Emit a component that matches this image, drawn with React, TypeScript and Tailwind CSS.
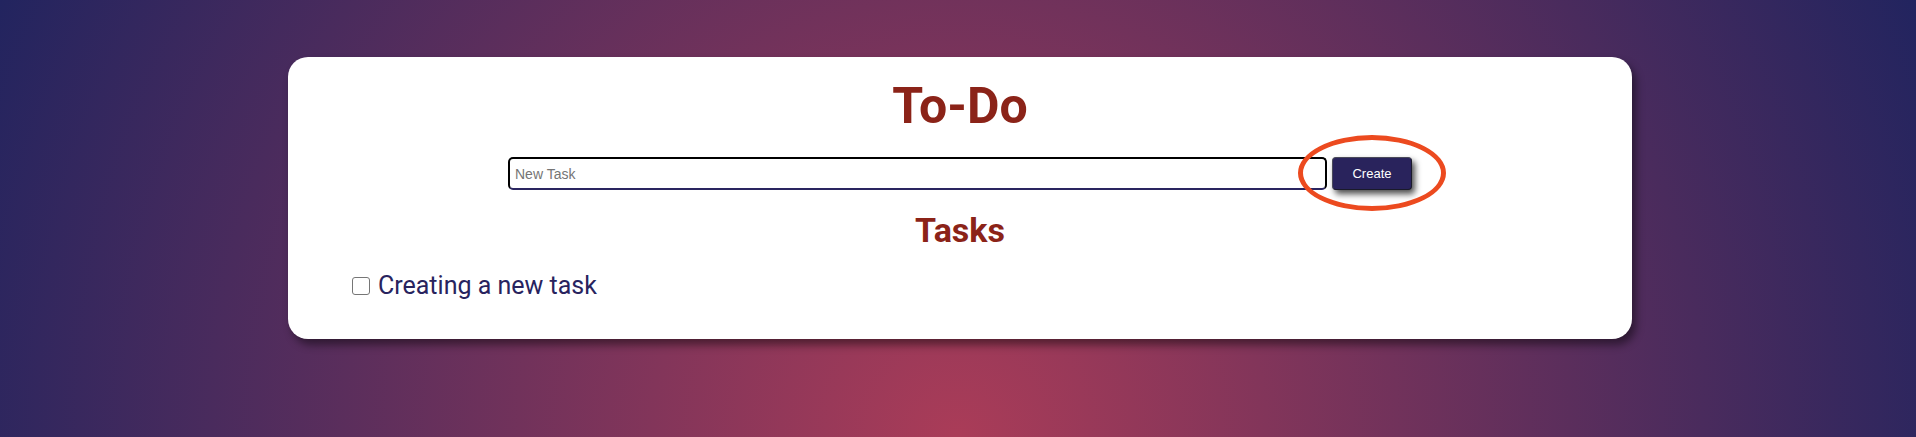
import { useState } from "react";

export default function App() {
  const [task, setTask] = useState("");
  const [done, setDone] = useState(false);

  return (
    <div className="min-h-[437px] w-full bg-[radial-gradient(circle_at_50%_100%,#aa3c58_0%,#22245f_100%)] pt-[57px] pb-[98px] font-['Roboto',sans-serif]">
      {/* Card */}
      <div className="ml-[288px] flex w-[1344px] flex-col items-center rounded-[20px] bg-white pt-[19px] pb-[37px] shadow-[4px_6px_8px_rgba(0,0,0,0.45)]">
        <h1 className="text-[50px] leading-[60px] font-bold text-[#8b2318]">To-Do</h1>

        <div className="relative mt-[21px] flex items-center gap-[5px]">
          <input
            value={task}
            onChange={(e) => setTask(e.target.value)}
            placeholder="New Task"
            className="h-[33px] w-[819px] rounded-[5px] border-2 border-black border-b-[#2a2560] bg-white px-[5px] font-['Liberation_Sans',Arial,sans-serif] text-[14px] text-black outline-none placeholder:text-[#757575]"
          />
          <button className="h-[33px] w-[80px] rounded-[4px] border border-[#4a4a5a] border-r-[#1a1a2a] border-b-[#1a1a2a] bg-[#29235c] font-['Liberation_Sans',Arial,sans-serif] text-[13px] text-white shadow-[3px_4px_6px_rgba(0,0,0,0.7)]">
            Create
          </button>
          {/* annotation ring */}
          <div className="pointer-events-none absolute right-[-34px] top-[-22px] h-[76px] w-[148px] rounded-[50%] border-[5px] border-[#ec4a1f]" />
        </div>

        <h2 className="mt-[20px] text-[34px] leading-[40px] font-bold text-[#8b2318]">Tasks</h2>

        <div className="mt-[20px] flex w-full px-[64px]">
          <label className="flex items-center gap-[8px] text-[25px] leading-[32px] text-[#28235e]">
            <input
              type="checkbox"
              checked={done}
              onChange={() => setDone(!done)}
              className="h-[18px] w-[18px] appearance-none rounded-[3px] border-[1.5px] border-[#767676] bg-white checked:bg-[#29235c]"
            />
            Creating a new task
          </label>
        </div>
      </div>
    </div>
  );
}
